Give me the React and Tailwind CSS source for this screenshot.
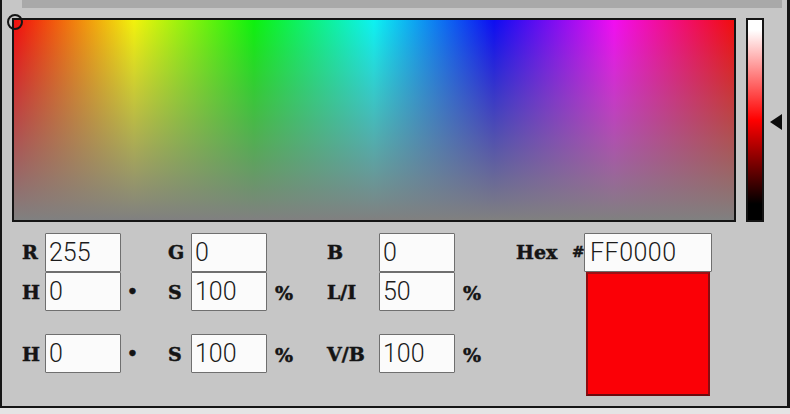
import React from "react";

const Label = ({ children, className = "", size = "text-[19px]" }) => (
  <span
    className={`${size} font-['DejaVu_Serif',serif] font-bold leading-none text-[#141414] [-webkit-text-stroke:0.5px_#141414] flex items-center ${className}`}
  >
    {children}
  </span>
);

const Field = ({ value, className = "w-[76px] pl-[3px]" }) => (
  <input
    readOnly
    value={value}
    className={`${className} h-[39px] shrink-0 bg-[#fbfbfb] border border-[#6f6f6f] rounded-[1px] font-['Roboto',sans-serif] font-light text-[25px] text-[#1c1c1c] outline-none`}
  />
);

const Row = ({ h, s, third, thirdLabel, className = "" }) => (
  <div className={`flex h-[39px] items-stretch ${className}`}>
    <Label className="w-[23px] pt-[2px]">{h}</Label>
    <Field value="0" />
    <Label className="w-[47px] pl-[6px]" size="text-[17px]">•</Label>
    <Label className="w-[23px] pt-[2px]">S</Label>
    <Field value={s} />
    <Label className="w-[60px] pl-[8px] pt-[4px]">%</Label>
    <Label className="w-[52px] pt-[2px]">{thirdLabel}</Label>
    <Field value={third} />
    <Label className="w-[61px] pl-[8px] pt-[4px]">%</Label>
  </div>
);

export default function App() {
  return (
    <div className="w-[790px] h-[414px] overflow-hidden bg-[#e4e4e4] flex flex-col">
      <div className="h-[408px] bg-[#c6c6c6] border-l-[2px] border-r-[3px] border-b-[2px] border-[#151515] flex flex-col">
        {/* title strip cut off by the crop */}
        <div className="h-[8px] ml-[20px] mr-[5px] bg-[#a9a9a9] shrink-0" />

        <div className="flex mt-[10px] ml-[10px] h-[204px]">
          <div className="relative w-[724px] border-2 border-[#141414] bg-[image:linear-gradient(to_bottom,rgba(128,128,128,0.1),#808080),linear-gradient(to_right,#ff0000,#ffff00_16.67%,#00ff00_33.33%,#00ffff_50%,#0000ff_66.67%,#ff00ff_83.33%,#ff0000)]">
            <div className="absolute -left-[7px] -top-[6px] w-[16px] h-[16px] rounded-full border-2 border-[#141414]" />
          </div>
          <div className="ml-[10px] w-[18px] border-2 border-[#141414] bg-[linear-gradient(to_bottom,#ffffff_5%,#ff0000_50%,#000000_92%)]" />
          <svg className="ml-[6px] mt-[96px] w-[12px] h-[16px]" viewBox="0 0 12 16">
            <polygon points="0,8 12,0 12,16" fill="#0c0c0c" />
          </svg>
        </div>

        <div className="flex mt-[11px] pl-[20px]">
          <div className="flex flex-col">
            <div className="flex h-[39px] items-stretch">
              <Label className="w-[23px]">R</Label>
              <Field value="255" />
              <span className="w-[47px]" />
              <Label className="w-[23px]">G</Label>
              <Field value="0" />
              <span className="w-[60px]" />
              <Label className="w-[52px]">B</Label>
              <Field value="0" />
              <span className="w-[61px]" />
            </div>
            <Row h="H" s="100" thirdLabel="L/I" third="50" />
            <Row h="H" s="100" thirdLabel="V/B" third="100" className="mt-[23px]" />
          </div>
          <div className="flex flex-col">
            <div className="flex h-[39px]">
              <Label className="w-[56px]">Hex</Label>
              <Label className="w-[12px]" size="text-[15px]">#</Label>
              <Field value="FF0000" className="w-[128px] pl-[5px] tracking-[0.5px]" />
            </div>
            <div className="ml-[70px] w-[124px] h-[124px] bg-[#fb0006] border-2 border-t-[#a01015] border-x-[#8a0c10] border-b-[#6a0a0e]" />
          </div>
        </div>
      </div>
    </div>
  );
}
